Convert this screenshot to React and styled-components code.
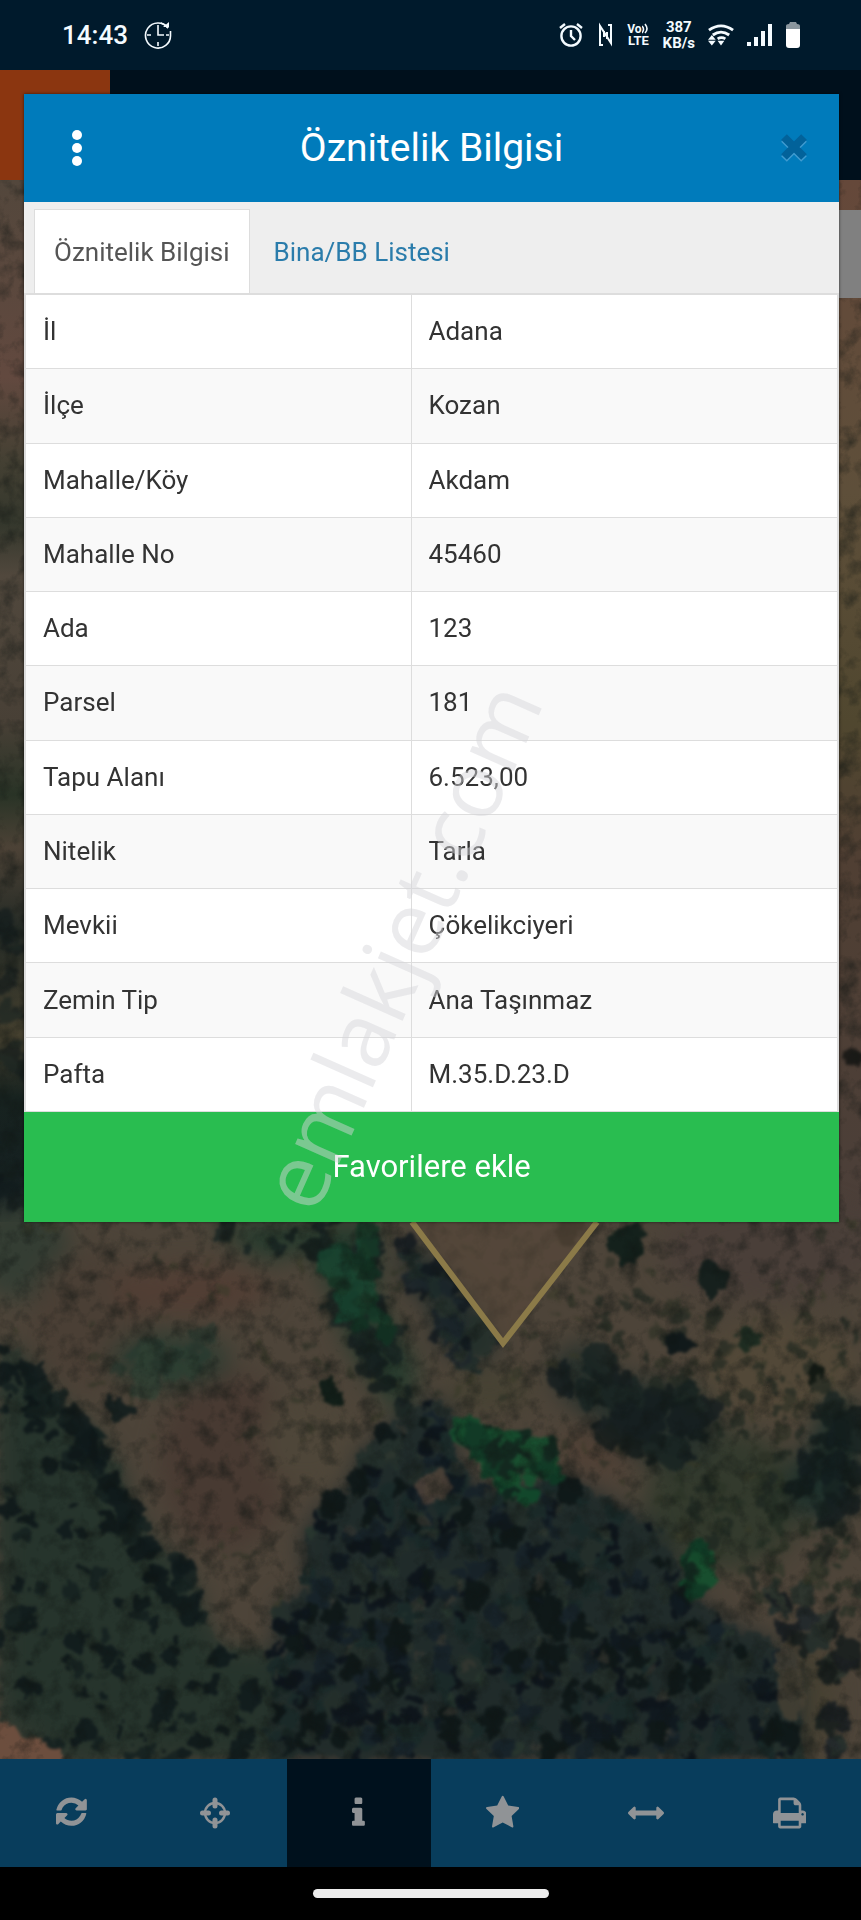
import React from "react";
import styled, { createGlobalStyle } from "styled-components";

const GlobalStyle = createGlobalStyle`
  * { box-sizing: border-box; }
  body { margin: 0; background: #000; font-family: Roboto, "Liberation Sans", sans-serif; }
  button { font-family: inherit; border: 0; cursor: pointer; }
`;

const Screen = styled.div`
  position: relative;
  display: flex;
  flex-direction: column;
  min-height: 100vh;
  overflow: hidden;
`;

const StatusBar = styled.header`
  display: flex;
  align-items: center;
  height: 70px;
  padding: 0 61px 0 62px;
  background: #001a2c;
  color: #f4fbff;
`;

const Time = styled.time`
  font-size: 26px;
  font-weight: 500;
  line-height: 32px;
  margin-right: 16px;
`;

const StatusIcons = styled.div`
  display: flex;
  align-items: center;
  gap: 13px;
  margin-left: auto;
`;

const StackedLabel = styled.span`
  display: flex;
  flex-direction: column;
  align-items: center;
  font-size: 15px;
  font-weight: 700;
  line-height: 16px;
`;

const VolteLabel = styled(StackedLabel)`
  font-size: 13px;
  line-height: 12px;
`;

const VolteTop = styled.span`
  display: flex;
  align-items: center;
  font-size: 12px;
`;

const AppHeader = styled.div`
  height: 110px;
  background: #00101c;
`;

const HeaderCorner = styled.div`
  width: 110px;
  height: 100%;
  background: #8b3610;
`;

const MapArea = styled.main`
  position: relative;
  flex: 1;
  overflow: hidden;
  background: #50453a;
`;

const MapDrawing = styled.svg`
  position: absolute;
  inset: 0;
  width: 100%;
  height: 100%;

  filter { color-interpolation-filters: sRGB; }
`;

const MapControl = styled.div`
  position: absolute;
  top: 30px;
  right: 0;
  width: 60px;
  height: 88px;
  background: #808080;
`;

const Toolbar = styled.nav`
  display: flex;
  height: 108px;
  background: #083d5c;
`;

const ToolButton = styled.button`
  flex: 1;
  display: flex;
  align-items: center;
  justify-content: center;
  padding: 0;
  color: #909396;
  background: ${(p) => (p.$active ? "#00111d" : "transparent")};
`;

const HomeArea = styled.footer`
  display: flex;
  justify-content: center;
  height: 53px;
  padding-top: 22px;
  background: #000;
`;

const HomePill = styled.div`
  width: 236px;
  height: 9px;
  border-radius: 5px;
  background: #ededed;
`;

const Dialog = styled.section`
  position: absolute;
  top: 94px;
  left: 24px;
  right: 22px;
  background: #fff;
  box-shadow: 0 0 3px rgba(0, 0, 0, 0.6);
`;

const DialogHeader = styled.div`
  display: grid;
  grid-template-columns: 1fr auto 1fr;
  align-items: center;
  height: 108px;
  padding: 0 28px 0 36px;
  background: #007bbb;
`;

const IconButton = styled.button`
  display: flex;
  align-items: center;
  justify-content: center;
  justify-self: ${(p) => (p.$end ? "end" : "start")};
  width: 34px;
  height: 44px;
  padding: 0;
  background: none;
`;

const Title = styled.h1`
  margin: 0 8px 0 0;
  color: #fff;
  font-size: 39px;
  font-weight: 400;
  line-height: 48px;
`;

const Tabs = styled.div`
  display: flex;
  align-items: flex-end;
  height: 92px;
  padding-left: 10px;
  border-bottom: 1px solid #ddd;
  background: #eee;
`;

const Tab = styled.button`
  height: 84px;
  padding: 0 ${(p) => (p.$active ? 19 : 23)}px;
  border: 1px solid ${(p) => (p.$active ? "#ddd" : "transparent")};
  border-bottom: 0;
  background: ${(p) => (p.$active ? "#fff" : "transparent")};
  color: ${(p) => (p.$active ? "#555" : "#2a7cab")};
  font-size: 26px;
  line-height: 32px;
`;

const Table = styled.table`
  width: 100%;
  height: 818px;
  border-collapse: collapse;
  table-layout: fixed;
  border: 2px solid #ddd;
  border-top-width: 1px;
  border-bottom: 0;
  color: #333;
  font-size: 26px;
  line-height: 32px;
`;

const Row = styled.tr`
  background: #fff;
  &:nth-child(even) { background: #f9f9f9; }
`;

const Label = styled.th`
  width: 386px;
  padding: 0 17px 1px;
  border: 1px solid #ddd;
  border-left: 0;
  text-align: left;
  font-weight: 400;
`;

const Value = styled.td`
  padding: 0 17px 1px;
  border: 1px solid #ddd;
  border-right: 0;
`;

const FavoriteButton = styled.button`
  display: block;
  width: 100%;
  height: 110px;
  background: #29bd50;
  color: #fff;
  font-size: 31px;
  line-height: 36px;
`;

const Watermark = styled.div`
  position: absolute;
  top: 945px;
  left: 398px;
  transform: translate(-50%, -50%) rotate(-66deg);
  color: rgba(214, 214, 218, 0.48);
  font-family: "Open Sans", "Noto Sans", sans-serif;
  font-size: 90px;
  line-height: 96px;
  white-space: nowrap;
  pointer-events: none;
`;

const ROWS = [
  ["İl", "Adana"],
  ["İlçe", "Kozan"],
  ["Mahalle/Köy", "Akdam"],
  ["Mahalle No", "45460"],
  ["Ada", "123"],
  ["Parsel", "181"],
  ["Tapu Alanı", "6.523,00"],
  ["Nitelik", "Tarla"],
  ["Mevkii", "Çökelikciyeri"],
  ["Zemin Tip", "Ana Taşınmaz"],
  ["Pafta", "M.35.D.23.D"],
];

const GLYPHS = {
  refresh: [1536, "M1511 928q0 5-1 7-64 268-268 434.5t-478 166.5q-146 0-282.5-55t-243.5-157l-129 129q-19 19-45 19t-45-19-19-45v-448q0-26 19-45t45-19h448q26 0 45 19t19 45-19 45l-137 137q71 66 161 102t187 36q134 0 250-65t186-179q11-17 53-117 8-23 30-23h192q13 0 22.5 9.5t9.5 22.5zm25-672v448q0 26-19 45t-45 19h-448q-26 0-45-19t-19-45 19-45l138-138q-148-137-349-137-134 0-250 65t-186 179q-11 17-53 117-8 23-30 23h-199q-13 0-22.5-9.5t-9.5-22.5v-7q65-268 270-434.5t480-166.5q146 0 284 55.5t245 156.5l130-129q19-19 45-19t45 19 19 45z"],
  info: [640, "M640 1344v128q0 26-19 45t-45 19h-512q-26 0-45-19t-19-45v-128q0-26 19-45t45-19h64v-384h-64q-26 0-45-19t-19-45v-128q0-26 19-45t45-19h384q26 0 45 19t19 45v576h64q26 0 45 19t19 45zm-128-1152v192q0 26-19 45t-45 19h-256q-26 0-45-19t-19-45v-192q0-26 19-45t45-19h256q26 0 45 19t19 45z"],
  star: [1664, "M1664 647q0 22-26 48l-363 354 86 500q1 7 1 20 0 21-10.5 35.5t-30.5 14.5q-19 0-40-12l-449-236-449 236q-22 12-40 12-21 0-31.5-14.5t-10.5-35.5q0-6 2-20l86-500-364-354q-25-27-25-48 0-37 56-46l502-73 225-455q19-41 49-41t49 41l225 455 502 73q56 9 56 46z"],
  measure: [1792, "M1792 896q0 26-19 45l-256 256q-19 19-45 19t-45-19-19-45v-128h-1024v128q0 26-19 45t-45 19-45-19l-256-256q-19-19-19-45t19-45l256-256q19-19 45-19t45 19 19 45v128h1024v-128q0-26 19-45t45-19 45 19l256 256q19 19 19 45z"],
  print: [1664, "M384 1536h896v-256h-896v256zm0-640h896v-384h-160q-40 0-68-28t-28-68v-160h-640v640zm1152 64q0-26-19-45t-45-19-45 19-19 45 19 45 45 19 45-19 19-45zm128 0v416q0 13-9.5 22.5t-22.5 9.5h-224v160q0 40-28 68t-68 28h-960q-40 0-68-28t-28-68v-160h-224q-13 0-22.5-9.5t-9.5-22.5v-416q0-79 56.5-135.5t135.5-56.5h64v-544q0-40 28-68t68-28h672q40 0 88 20t76 48l152 152q28 28 48 76t20 88v256h64q79 0 135.5 56.5t56.5 135.5z"],
};

function Glyph({ name }) {
  if (name === "locate") {
    return (
      <svg width="30" height="32" viewBox="0 0 30 32" fill="none" stroke="currentColor" aria-hidden="true">
        <circle cx="15" cy="16" r="10" strokeWidth="2.4" />
        <path d="M15 3v6M15 23v6M2.500 16h6M21.500 16h6" strokeWidth="5" strokeLinecap="round" />
      </svg>
    );
  }
  const [width, d] = GLYPHS[name];
  return (
    <svg width={(width / 1792) * 36} height="36" viewBox={`0 0 ${width} 1792`} fill="currentColor" aria-hidden="true">
      <path fillRule="evenodd" d={d} />
    </svg>
  );
}

const TOOLS = [
  ["refresh", "Yenile"],
  ["locate", "Konum"],
  ["info", "Bilgi"],
  ["star", "Favoriler"],
  ["measure", "Ölçüm"],
  ["print", "Yazdır"],
];

function random(seed) {
  let s = seed;
  return () => {
    s = (s * 16807) % 2147483647;
    return s / 2147483647;
  };
}

function inside([x, y], poly) {
  let hit = false;
  for (let i = 0, j = poly.length - 1; i < poly.length; j = i++) {
    const [xi, yi] = poly[i];
    const [xj, yj] = poly[j];
    if (yi > y !== yj > y && x < ((xj - xi) * (y - yi)) / (yj - yi) + xi) hit = !hit;
  }
  return hit;
}

function scatter(poly, count, minR, maxR, seed) {
  const rnd = random(seed * 7919);
  const xs = poly.map((p) => p[0]);
  const ys = poly.map((p) => p[1]);
  const x0 = Math.min(...xs);
  const y0 = Math.min(...ys);
  const w = Math.max(...xs) - x0;
  const h = Math.max(...ys) - y0;
  const out = [];
  for (let tries = 0; out.length < count && tries < count * 20; tries++) {
    const p = [x0 + rnd() * w, y0 + rnd() * h];
    if (inside(p, poly)) out.push([p[0], p[1], minR + rnd() * (maxR - minR), rnd()]);
  }
  return out;
}

const WEST_WOOD = [[0, 1345], [20, 1350], [40, 1378], [62, 1405], [95, 1430], [122, 1470], [128, 1500], [150, 1540], [190, 1575], [203, 1610], [215, 1645], [285, 1655], [300, 1759], [60, 1759], [0, 1715]];
const WEST_EDGE = [[0, 1345], [20, 1350], [40, 1378], [62, 1405], [95, 1425], [120, 1465], [130, 1500], [155, 1540], [197, 1570], [205, 1620], [170, 1600], [110, 1530], [80, 1460], [50, 1430], [0, 1390]];
const MAIN_WOOD = [[278, 1602], [310, 1595], [302, 1540], [320, 1510], [350, 1488], [360, 1455], [400, 1420], [430, 1400], [455, 1410], [450, 1450], [480, 1490], [570, 1480], [615, 1505], [660, 1530], [690, 1595], [730, 1625], [770, 1640], [800, 1670], [800, 1759], [270, 1759]];
const NORTH_WOOD = [[550, 1355], [590, 1340], [615, 1375], [695, 1385], [720, 1420], [700, 1465], [640, 1460], [590, 1420], [560, 1395]];
const EAST_WOOD = [[861, 1410], [825, 1395], [812, 1440], [784, 1480], [790, 1510], [830, 1525], [861, 1490]];
const SOUTH_EAST_WOOD = [[770, 1590], [805, 1580], [850, 1645], [848, 1720], [861, 1759], [830, 1759], [825, 1660], [775, 1625]];
const PARCEL_WOOD = [[400, 1240], [425, 1250], [475, 1300], [500, 1345], [475, 1365], [440, 1345], [425, 1300], [405, 1285]];
const TOP_WOOD = [[210, 1222], [380, 1222], [378, 1300], [420, 1370], [400, 1420], [350, 1350], [330, 1290], [310, 1250], [265, 1262], [230, 1240]];
const TOP_GREEN = [[325, 1225], [375, 1225], [370, 1275], [395, 1340], [350, 1320], [325, 1260]];
const BRIGHT_GREEN = [[455, 1425], [530, 1430], [560, 1470], [550, 1500], [515, 1500], [480, 1470]];
const SMALL_GREEN = [[690, 1550], [712, 1555], [710, 1592], [682, 1590]];
const BUSHES = [[110, 1370], [150, 1345], [210, 1330], [215, 1365], [175, 1385], [130, 1395]];
const SCRUB = [[0, 1222], [861, 1222], [861, 1620], [740, 1620], [600, 1480], [440, 1420], [320, 1480], [280, 1640], [210, 1600], [100, 1420], [0, 1330]];
const EAST_SCRUB = [[560, 1290], [861, 1310], [861, 1400], [780, 1470], [720, 1440], [640, 1370]];
const SOUTH_SCRUB = [[660, 1470], [780, 1480], [861, 1530], [861, 1620], [760, 1600], [700, 1540]];
const LEFT_EDGE = [[0, 920], [24, 900], [24, 1225], [0, 1225]];

function points(poly) {
  return poly.map((p) => p.join(",")).join(" ");
}

function Trees({ area, count, min, max, seed, colors, opacity = 0.75 }) {
  return (
    <g opacity={opacity}>
      {scatter(area, count, min, max, seed).map(([x, y, r, k], i) => (
        <ellipse key={i} cx={x} cy={y} rx={r} ry={r * (0.7 + k * 0.6)} fill={colors[Math.floor(k * colors.length)]} />
      ))}
    </g>
  );
}

const DARK = ["#0d141b", "#10181f", "#172229", "#1b2a29", "#25302b", "#0e1718"];
const MIXED = ["#0f1819", "#162220", "#101a1c"];
const GREENS = ["#134a2c", "#0f3a25", "#17502f", "#10271e"];

function SatelliteMap() {
  return (
    <MapDrawing viewBox="0 180 861 1579" preserveAspectRatio="xMidYMin slice" aria-hidden="true">
      <defs>
        <linearGradient id="edge" x1="0" y1="180" x2="0" y2="1222" gradientUnits="userSpaceOnUse">
          <stop offset="0" stopColor="#53473c" />
          <stop offset="0.19" stopColor="#62493f" />
          <stop offset="0.27" stopColor="#444033" />
          <stop offset="0.33" stopColor="#34372c" />
          <stop offset="0.38" stopColor="#51483d" />
          <stop offset="0.52" stopColor="#484036" />
          <stop offset="0.59" stopColor="#293326" />
          <stop offset="0.64" stopColor="#4c4236" />
          <stop offset="0.72" stopColor="#242a25" />
          <stop offset="0.82" stopColor="#45402f" />
          <stop offset="0.88" stopColor="#17221f" />
          <stop offset="1" stopColor="#151f22" />
        </linearGradient>
        <linearGradient id="east" x1="0" y1="180" x2="0" y2="1222" gradientUnits="userSpaceOnUse">
          <stop offset="0" stopColor="#65483a" />
          <stop offset="0.3" stopColor="#5e4f3a" />
          <stop offset="0.52" stopColor="#50472f" />
          <stop offset="0.65" stopColor="#503f33" />
          <stop offset="1" stopColor="#4b3f39" />
        </linearGradient>
        <filter id="soft" x="-20%" y="-20%" width="140%" height="140%"><feGaussianBlur stdDeviation="12" /></filter>
        <filter id="fuzz" x="-5%" y="-5%" width="110%" height="110%">
          <feTurbulence type="fractalNoise" baseFrequency="0.06" numOctaves="4" seed="4" result="n" />
          <feDisplacementMap in="SourceGraphic" in2="n" scale="22" xChannelSelector="R" yChannelSelector="G" />
          <feGaussianBlur stdDeviation="1.6" />
        </filter>
        <filter id="grain" x="0" y="0" width="100%" height="100%">
          <feTurbulence type="fractalNoise" baseFrequency="0.05" numOctaves="5" seed="9" />
          <feColorMatrix values="0 0 0 0 0.06  0 0 0 0 0.08  0 0 0 0 0.07  2.4 0 0 0 -1.1" />
        </filter>
      </defs>
      <rect y="180" width="861" height="1579" fill="#4d4439" />
      <rect y="180" width="60" height="1042" fill="url(#edge)" />
      <rect x="800" y="180" width="61" height="1042" fill="url(#east)" />
      <g filter="url(#soft)">
        <ellipse cx="20" cy="1250" rx="50" ry="50" fill="#343d33" />
        <ellipse cx="90" cy="1320" rx="60" ry="70" fill="#4a3f35" />
        <ellipse cx="190" cy="1290" rx="80" ry="25" fill="#513e34" />
        <ellipse cx="225" cy="1460" rx="65" ry="90" fill="#483a32" />
        <ellipse cx="310" cy="1440" rx="50" ry="50" fill="#4e4639" />
        <ellipse cx="170" cy="1360" rx="60" ry="28" fill="#2f3c31" />
        <ellipse cx="770" cy="1250" rx="110" ry="50" fill="#4a3f39" />
        <ellipse cx="780" cy="1370" rx="80" ry="50" fill="#524838" />
        <ellipse cx="490" cy="1390" rx="45" ry="20" fill="#464233" />
        <ellipse cx="600" cy="1450" rx="40" ry="30" fill="#504136" />
        <ellipse cx="725" cy="1500" rx="80" ry="70" fill="#333a2d" />
        <ellipse cx="800" cy="1700" rx="35" ry="60" fill="#474132" />
        <polygon points={points(WEST_WOOD)} fill="#27342c" />
        <polygon points={points(MAIN_WOOD)} fill="#202a2a" />
        <polygon points={points(NORTH_WOOD)} fill="#28312c" />
        <polygon points={points(EAST_WOOD)} fill="#1f302b" />
        <polygon points={points(TOP_WOOD)} fill="#263a2d" />
        <polygon points={points(PARCEL_WOOD)} fill="#222d2b" />
      </g>
      <g filter="url(#fuzz)">
        <polygon points={points(WEST_WOOD)} fill="#26332b" opacity="0.5" />
        <polygon points={points(MAIN_WOOD)} fill="#202c2b" opacity="0.8" />
        <Trees area={SCRUB} count={170} min={2} max={6} seed={17} colors={["#2b3023", "#252b21", "#363827"]} opacity={0.5} />
        <Trees area={EAST_SCRUB} count={80} min={3} max={8} seed={27} colors={["#2b3023", "#1a241d"]} opacity={0.6} />
        <Trees area={SOUTH_SCRUB} count={60} min={4} max={9} seed={29} colors={["#1f2a20", "#2a3226", "#18221d"]} opacity={0.6} />
        <Trees area={BUSHES} count={40} min={5} max={11} seed={31} colors={["#263a2f", "#22332a", "#2c4033"]} opacity={0.6} />
        <Trees area={WEST_WOOD} count={110} min={4} max={11} seed={33} colors={MIXED} opacity={0.85} />
        <Trees area={WEST_EDGE} count={55} min={6} max={13} seed={35} colors={MIXED} opacity={0.85} />
        <Trees area={MAIN_WOOD} count={480} min={4} max={13} seed={51} colors={DARK} opacity={0.9} />
        <Trees area={MAIN_WOOD} count={80} min={2} max={6} seed={53} colors={["#333b31", "#2b3b30", "#3b3a33"]} opacity={0.6} />
        <Trees area={NORTH_WOOD} count={50} min={7} max={16} seed={61} colors={MIXED} />
        <Trees area={EAST_WOOD} count={34} min={6} max={14} seed={71} colors={MIXED} />
        <Trees area={SOUTH_EAST_WOOD} count={30} min={6} max={14} seed={81} colors={DARK} />
        <Trees area={TOP_WOOD} count={50} min={4} max={12} seed={91} colors={MIXED} />
        <Trees area={PARCEL_WOOD} count={30} min={6} max={13} seed={95} colors={DARK} />
        <Trees area={LEFT_EDGE} count={30} min={4} max={12} seed={99} colors={MIXED} opacity={0.6} />
        <Trees area={TOP_GREEN} count={36} min={4} max={12} seed={103} colors={["#153c28", "#123322", "#174530"]} opacity={0.8} />
        <Trees area={BRIGHT_GREEN} count={60} min={5} max={14} seed={107} colors={GREENS} opacity={0.95} />
        <Trees area={SMALL_GREEN} count={20} min={5} max={11} seed={109} colors={GREENS} opacity={0.95} />
        <ellipse cx="629" cy="1245" rx="20" ry="20" fill="#14211c" />
        <ellipse cx="711" cy="1278" rx="13" ry="18" fill="#16201d" />
        <ellipse cx="568" cy="1230" rx="13" ry="13" fill="#29271d" />
        <ellipse cx="680" cy="1343" rx="14" ry="11" fill="#11191a" />
        <ellipse cx="747" cy="1338" rx="14" ry="12" fill="#1e2c21" />
        <ellipse cx="817" cy="1372" rx="9" ry="9" fill="#141a14" />
        <ellipse cx="331" cy="1394" rx="12" ry="13" fill="#121e18" />
        <ellipse cx="120" cy="1410" rx="14" ry="11" fill="#17201f" />
        <ellipse cx="855" cy="1056" rx="10" ry="10" fill="#1c1b18" />
        <ellipse cx="433" cy="1488" rx="18" ry="14" fill="#51443a" opacity="0.8" />
        <ellipse cx="790" cy="1680" rx="15" ry="40" fill="#4d4536" opacity="0.7" />
        <path d="M-20 1700Q12 1732 60 1750V1790H-20Z" fill="#6c4e3e" />
      </g>
      <rect y="180" width="861" height="1579" filter="url(#grain)" opacity="0.5" />
      <polygon points="412,1222 503,1343 597,1222" fill="#57483a" opacity="0.65" />
      <path d="M412 1222L503 1343L597 1222" fill="none" stroke="#8b7a48" strokeWidth="6" />
    </MapDrawing>
  );
}

function StatusGlyphs() {
  return (
    <StatusIcons>
      <svg width="24" height="26" viewBox="0 0 24 26" fill="none" stroke="currentColor" strokeWidth="2.4">
        <circle cx="12" cy="14" r="9.6" />
        <path d="M12 8v6l4 4M1 6l5-4M23 6l-5-4" />
      </svg>
      <svg width="18" height="26" viewBox="0 0 18 26" fill="none" stroke="currentColor" strokeWidth="2">
        <path d="M7 23H4V4l11 17V3h-3M8 15V9M11 10v7" />
      </svg>
      <VolteLabel>
        <VolteTop>
          Vo
          <svg width="8" height="12" viewBox="0 0 8 12" fill="none" stroke="currentColor" strokeWidth="1.6">
            <path d="M0 3q3 3 0 7M3 1q4 5 0 9" />
          </svg>
        </VolteTop>
        LTE
      </VolteLabel>
      <StackedLabel>
        <span>387</span>
        <span>KB/s</span>
      </StackedLabel>
      <svg width="26" height="24" viewBox="0 0 27 24" fill="none" stroke="currentColor" strokeWidth="3">
        <path d="M1 7q12.500-9 25 0M5 12q8.500-6 17 0M10 16q4-2.500 8 0" />
        <path d="M4 12l4 5H0zM0 18h8l-4 5zM10 18h7l-3.500 5z" fill="currentColor" stroke="none" />
      </svg>
      <svg width="26" height="23" viewBox="0 0 26 23" fill="currentColor">
        <path d="M0 18h4v4H0zM7 13h4v9H7zM14 7h4v15h-4zM21 0h4v22h-4z" />
      </svg>
      <svg width="14" height="26" viewBox="0 0 14 26">
        <path d="M0 7V4q0-2 3-2l1-2h6l1 2q3 0 3 2v3z" fill="#8b979f" />
        <path d="M0 7h14v16q0 3-3 3H3q-3 0-3-3z" fill="#fff" />
      </svg>
    </StatusIcons>
  );
}

export default function App() {
  return (
    <Screen>
      <GlobalStyle />
      <StatusBar>
        <Time>14:43</Time>
        <svg width="28" height="28" viewBox="0 0 28 28" fill="none" stroke="currentColor" strokeWidth="1.6">
          <path d="M24 7A12.500 12.500 0 1 0 26.500 14V10" />
          <path d="M24 7A12.500 12.500 0 0 0 17 2M14 4v10h6M14 21v4M3 14h4M22 14h3" />
          <path d="M19 6h6V1z" fill="currentColor" stroke="none" />
        </svg>
        <StatusGlyphs />
      </StatusBar>
      <AppHeader>
        <HeaderCorner />
      </AppHeader>
      <MapArea>
        <SatelliteMap />
        <MapControl />
      </MapArea>
      <Toolbar>
        {TOOLS.map(([name, label]) => (
          <ToolButton key={name} type="button" aria-label={label} $active={name === "info"}>
            <Glyph name={name} />
          </ToolButton>
        ))}
      </Toolbar>
      <HomeArea>
        <HomePill />
      </HomeArea>
      <Dialog role="dialog" aria-labelledby="dialog-title">
        <DialogHeader>
          <IconButton type="button" aria-label="Menü">
            <svg width="10" height="38" viewBox="0 0 10 38" fill="#fff">
              <circle cx="5" cy="6" r="5" />
              <circle cx="5" cy="19" r="5" />
              <circle cx="5" cy="32" r="5" />
            </svg>
          </IconButton>
          <Title id="dialog-title">Öznitelik Bilgisi</Title>
          <IconButton type="button" aria-label="Kapat" $end>
            <svg width="28" height="30" viewBox="0 0 28 30" fill="none" strokeWidth="8" strokeLinejoin="round">
              <path d="M4 6l20 20M24 6L4 26" stroke="#3f9bd0" />
              <path d="M4 4l20 20M24 4L4 24" stroke="#02629a" />
            </svg>
          </IconButton>
        </DialogHeader>
        <Tabs role="tablist">
          <Tab type="button" role="tab" aria-selected="true" $active>Öznitelik Bilgisi</Tab>
          <Tab type="button" role="tab" aria-selected="false">Bina/BB Listesi</Tab>
        </Tabs>
        <Table>
          <tbody>
            {ROWS.map(([label, value]) => (
              <Row key={label}>
                <Label scope="row">{label}</Label>
                <Value>{value}</Value>
              </Row>
            ))}
          </tbody>
        </Table>
        <FavoriteButton type="button">Favorilere ekle</FavoriteButton>
      </Dialog>
      <Watermark aria-hidden="true">emlakjet.com</Watermark>
    </Screen>
  );
}
